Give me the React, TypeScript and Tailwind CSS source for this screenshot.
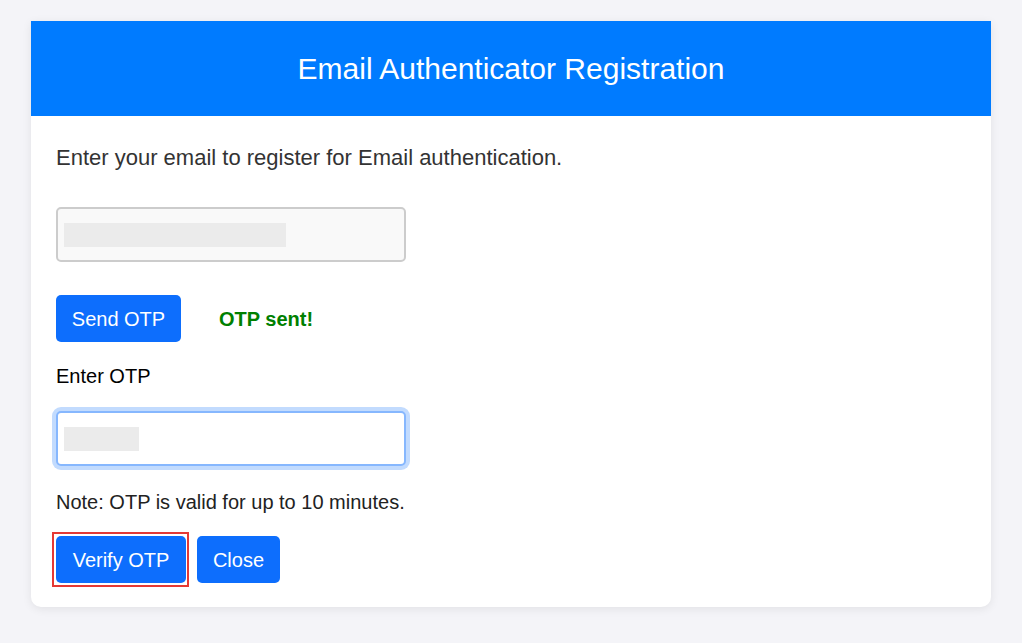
import React from "react";

export default function App() {
  return (
    <div
      className="min-h-[643px] w-full bg-[#f4f4f8] pt-[21px] px-[31px] pb-[36px]"
      style={{ fontFamily: '"Liberation Sans", Arial, sans-serif' }}
    >
      <div className="w-[960px] rounded-b-[10px] bg-white shadow-[0_2px_10px_rgba(0,0,0,0.08)]">
        <div className="flex h-[95px] items-center justify-center bg-[#007bff]">
          <h1 className="text-[30px] font-normal text-white">Email Authenticator Registration</h1>
        </div>
        <div className="px-[25px] pt-[29px] pb-[24px]">
          <p className="text-[22px] leading-[26px] text-[#333]">
            Enter your email to register for Email authentication.
          </p>
          <div className="mt-[36px] flex h-[55px] w-[350px] items-center rounded-[5px] border-2 border-[#cccccc] bg-[#f9f9f9] px-[6px]">
            <div className="h-[24px] w-[222px] bg-[#ebebeb]" />
          </div>
          <div className="mt-[33px] flex items-center">
            <button className="h-[47px] w-[125px] rounded-[5px] bg-[#0d6efd] text-[20px] text-white">
              Send OTP
            </button>
            <span className="ml-[38px] text-[20px] font-bold text-[#008000]">OTP sent!</span>
          </div>
          <div className="mt-[22px] text-[20px] leading-[24px] text-black">Enter OTP</div>
          <div className="mt-[23px] flex h-[55px] w-[350px] items-center rounded-[5px] border-2 border-[#86b7fe] bg-white px-[6px] shadow-[0_0_0_4px_#c2dbfe]">
            <div className="h-[24px] w-[75px] bg-[#ebebeb]" />
          </div>
          <p className="mt-[24px] text-[20px] leading-[24px] text-[#222]">
            Note: OTP is valid for up to 10 minutes.
          </p>
          <div className="mt-[22px] flex items-center">
            <div className="-my-[4px] -ml-[4px] border-2 border-[#e53935] py-[2px] pl-[2px] pr-[1px]">
              <button className="block h-[47px] w-[130px] rounded-[5px] bg-[#0d6efd] text-[20px] text-white">
                Verify OTP
              </button>
            </div>
            <button className="ml-[8px] h-[47px] w-[83px] rounded-[5px] bg-[#0d6efd] text-[20px] text-white">
              Close
            </button>
          </div>
        </div>
      </div>
    </div>
  );
}
